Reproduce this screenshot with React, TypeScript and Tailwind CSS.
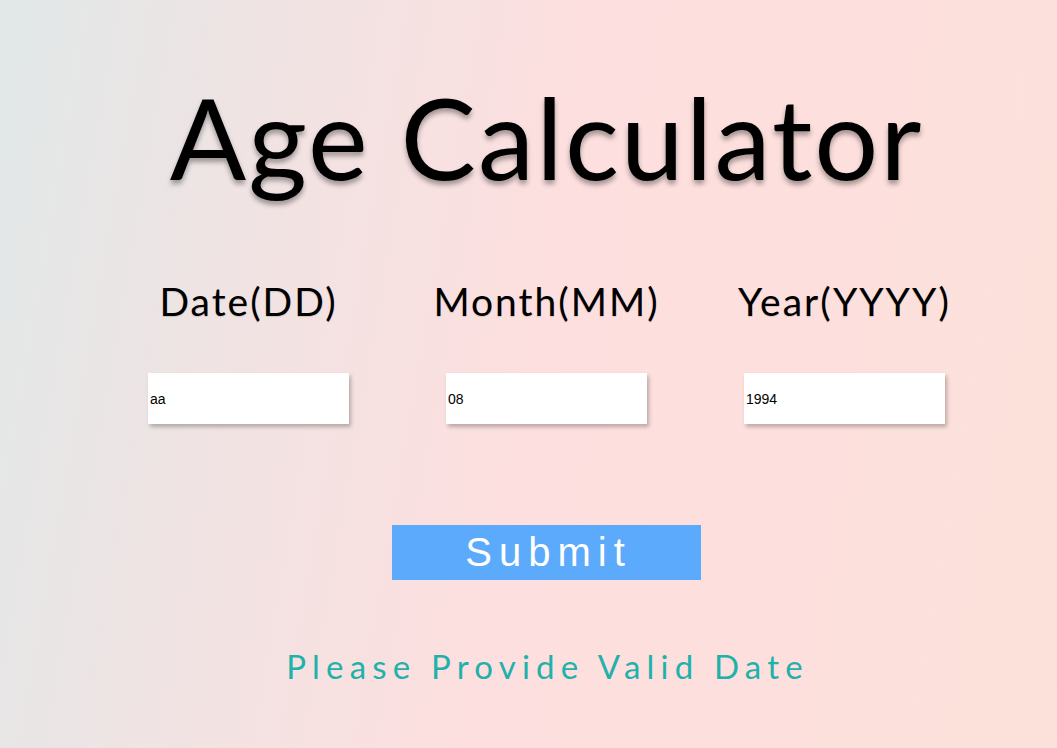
export default function App() {
  const fields = [
    { label: "Date(DD)", value: "aa" },
    { label: "Month(MM)", value: "08" },
    { label: "Year(YYYY)", value: "1994" },
  ];

  return (
    <div className="h-[748px] w-full overflow-hidden bg-[linear-gradient(100deg,#e1e8e8_0%,#f1e3e3_25%,#fddfdf_50%,#fde0dd_75%,#fbe1da_100%)] font-['Lato',sans-serif]">
      <div className="flex flex-col items-center pl-[36px]">
        {/* Title */}
        <h1 className="mt-[71px] h-[130px] text-[113px] leading-[130px] font-normal tracking-[2px] text-black [text-shadow:0_4px_5px_rgba(0,0,0,0.35)]">
          Age Calculator
        </h1>

        {/* Fields */}
        <div className="mt-[77px] grid w-[894px] grid-cols-3">
          {fields.map((field) => (
            <div key={field.label} className="flex flex-col items-center">
              <label className="h-[46px] text-[39px] leading-[46px] tracking-[2px] text-black [text-shadow:0_1px_1px_rgba(0,0,0,0.15)]">
                {field.label}
              </label>
              <input
                type="text"
                defaultValue={field.value}
                className="mt-[49px] h-[51px] w-[201px] bg-white px-[2px] font-['Liberation_Sans',sans-serif] text-[14px] text-black shadow-[2px_3px_4px_rgba(0,0,0,0.25)] outline-none"
              />
            </div>
          ))}
        </div>

        {/* Submit */}
        <button className="mt-[101px] h-[55px] w-[309px] bg-[#5caafb] pl-[4px] font-['Liberation_Sans',sans-serif] text-[40px] leading-[55px] tracking-[7px] text-white">
          Submit
        </button>

        {/* Message */}
        <p className="mt-[66px] pl-[2px] text-[33px] leading-[40px] tracking-[6.2px] text-[#20b2aa]">
          Please Provide Valid Date
        </p>
      </div>
    </div>
  );
}
